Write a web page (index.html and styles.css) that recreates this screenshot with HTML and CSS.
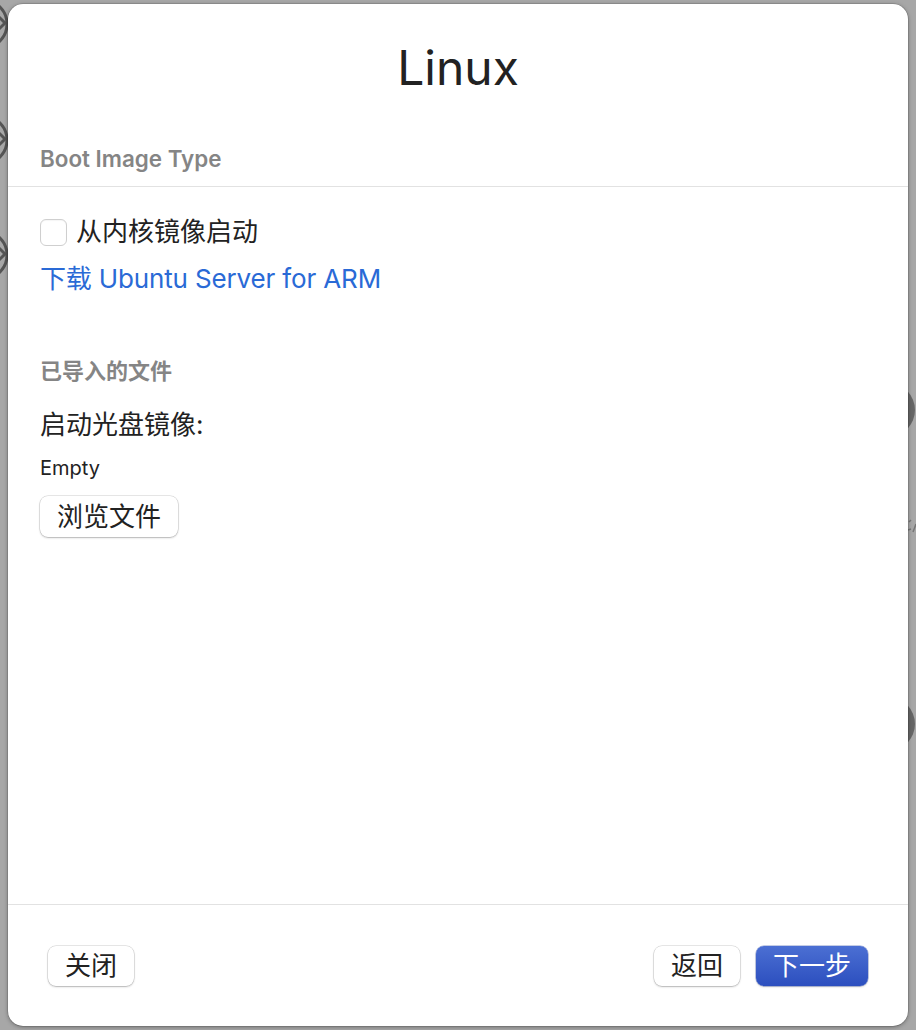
FILE: index.html
```html
<!DOCTYPE html>
<html lang="zh">
<head>
<meta charset="utf-8">
<title>Linux</title>
<link rel="stylesheet" href="styles.css">
</head>
<body>
<div class="backdrop" aria-hidden="true">
  <svg class="deco-left" width="8" height="300" viewBox="0 0 8 300">
    <g fill="none" stroke="#555" stroke-width="3">
      <circle cx="-17" cy="24" r="24"/>
      <path d="M-2 16 L5 23 L-2 30"/>
      <circle cx="-17" cy="140" r="24"/>
      <path d="M-2 132 L5 139 L-2 146"/>
      <circle cx="-17" cy="255" r="24"/>
      <path d="M-2 247 L5 254 L-2 261"/>
    </g>
  </svg>
  <svg class="deco-right" width="8" height="400" viewBox="0 0 8 400">
    <circle cx="-20" cy="26" r="27" fill="#666"/>
    <path d="M1 138 L3 136 M0 146 L3 145 M5 148 L8 140" stroke="#777" stroke-width="1.5" fill="none"/>
    <circle cx="-20" cy="340" r="27" fill="#666"/>
  </svg>
</div>
<div class="dialog">
  <h1 class="title">Linux</h1>
  <div class="section-head">Boot Image Type</div>
  <div class="content">
    <label class="check-row"><span class="checkbox"></span><span>从内核镜像启动</span></label>
    <a class="link" href="#">下载 Ubuntu Server for ARM</a>
    <div class="sub-head">已导入的文件</div>
    <div class="field-label">启动光盘镜像:</div>
    <div class="field-value">Empty</div>
    <button class="btn browse">浏览文件</button>
  </div>
  <div class="footer">
    <button class="btn">关闭</button>
    <div class="spacer"></div>
    <button class="btn">返回</button>
    <button class="btn primary">下一步</button>
  </div>
</div>
</body>
</html>
```

FILE: styles.css
```css
html, body {
  margin: 0;
  padding: 0;
}
body {
  width: 916px;
  height: 1030px;
  background: #a7a7a7;
  font-family: "Inter", "Noto Sans CJK SC", sans-serif;
  color: #222;
  position: relative;
  overflow: hidden;
  padding: 4px 8px;
  box-sizing: border-box;
}
.backdrop {
  position: absolute;
  inset: 0;
}
.deco-left {
  position: absolute;
  left: 0;
  top: 0;
}
.deco-right {
  position: absolute;
  left: 908px;
  top: 384px;
}
.dialog {
  position: relative;
  width: 900px;
  height: 1022px;
  background: #fff;
  border-radius: 15px;
  box-shadow: 0 1px 4px rgba(0,0,0,0.35), 0 0 0 0.5px rgba(0,0,0,0.2);
  display: flex;
  flex-direction: column;
}
.title {
  margin: 36px 0 0;
  font-size: 48px;
  line-height: 56px;
  font-weight: 400;
  text-align: center;
  color: #222;
}
.section-head {
  margin-top: 50px;
  padding: 0 32px 14px;
  font-size: 22.4px;
  line-height: 26px;
  font-weight: 600;
  color: #858585;
  border-bottom: 1px solid #e2e2e2;
}
.content {
  padding: 29px 32px 0;
  display: flex;
  flex-direction: column;
  align-items: flex-start;
  flex: 1;
}
.check-row {
  display: flex;
  align-items: center;
  gap: 9px;
  font-size: 26px;
  line-height: 32px;
  color: #222;
}
.checkbox {
  width: 25px;
  height: 25px;
  border: 1px solid #cfcfcf;
  border-radius: 6px;
  background: #fff;
  box-shadow: inset 0 1px 1px rgba(0,0,0,0.04);
}
.link {
  margin-top: 15px;
  font-size: 26px;
  line-height: 32px;
  color: #2a6ad6;
  text-decoration: none;
  letter-spacing: -0.15px;
}
.sub-head {
  margin-top: 62px;
  font-size: 22px;
  line-height: 28px;
  font-weight: 600;
  color: #858585;
}
.field-label {
  margin-top: 24px;
  font-size: 26px;
  line-height: 32px;
}
.field-value {
  margin-top: 14px;
  font-size: 20px;
  line-height: 26px;
}
.btn {
  font-family: inherit;
  font-size: 26px;
  line-height: 40px;
  height: 40px;
  padding: 0 17px;
  border: none;
  border-radius: 8px;
  background: #fff;
  color: #222;
  box-shadow: 0 0 0 0.5px rgba(0,0,0,0.18), 0 1px 2px rgba(0,0,0,0.22);
}
.browse {
  margin-top: 15px;
  height: 41px;
  line-height: 41px;
}
.footer {
  border-top: 1px solid #e2e2e2;
  padding: 41px 40px 40px;
  display: flex;
  align-items: center;
  gap: 16px;
}
.spacer {
  flex: 1;
}
.primary {
  color: #fff;
  background: linear-gradient(#4b6fd3, #2c4fbf);
  box-shadow: 0 0 0 0.5px rgba(30,60,160,0.5), 0 1px 2px rgba(0,0,0,0.2);
}
```
